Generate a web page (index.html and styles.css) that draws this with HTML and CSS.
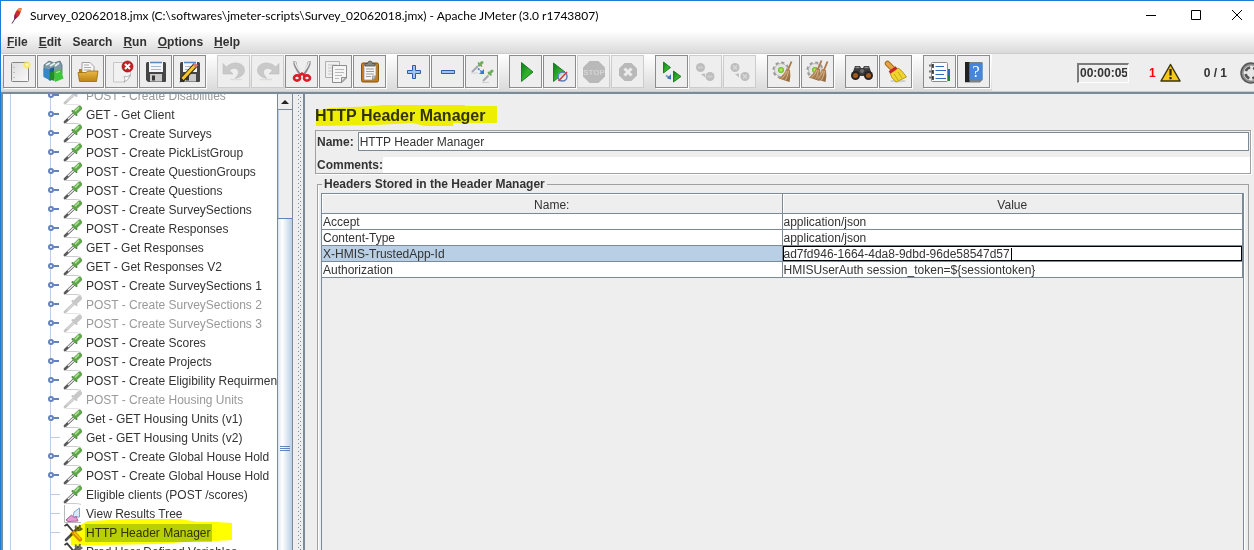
FILE: index.html
```html
<!DOCTYPE html>
<html lang="en">
<head>
<meta charset="utf-8">
<title>Apache JMeter</title>
<link rel="stylesheet" href="styles.css">
</head>
<body>
<svg class="defs" aria-hidden="true">
  <defs>
    <linearGradient id="gPage" x1="0" y1="0" x2="1" y2="1"><stop offset="0" stop-color="#dcdcdc"/><stop offset="1" stop-color="#fafafa"/></linearGradient>
    <linearGradient id="gFolder" x1="0" y1="0" x2="0" y2="1"><stop offset="0" stop-color="#eab84a"/><stop offset="1" stop-color="#bd8410"/></linearGradient>
    <linearGradient id="gPlay" x1="0" y1="0" x2="1" y2="1"><stop offset="0" stop-color="#0a7a1c"/><stop offset=".55" stop-color="#33b52c"/><stop offset="1" stop-color="#0b7d1b"/></linearGradient>
    <linearGradient id="gBroom" x1="0" y1="0" x2="1" y2="1"><stop offset="0" stop-color="#c9a070"/><stop offset="1" stop-color="#8c6238"/></linearGradient>
    <radialGradient id="gBall"><stop offset="0" stop-color="#c9f56a"/><stop offset="1" stop-color="#5fb81a"/></radialGradient>
    <radialGradient id="gGlow"><stop offset="0" stop-color="#fffde0"/><stop offset=".5" stop-color="#f6e85a"/><stop offset="1" stop-color="#f6e85a" stop-opacity="0"/></radialGradient>
    <symbol id="dropper" viewBox="0 0 20 20">
      <path d="M3 18.500h9q4 0 6 1" stroke="#ccc" stroke-width="1" fill="none"/>
      <path d="M2 17L11 8.500" stroke="#5a5a5a" stroke-width="2.800" stroke-linecap="round"/>
      <path d="M5 14L11 8.500" stroke="#f0f0f0" stroke-width="1.400"/>
      <path d="M9.500 6L13.500 10" stroke="#4d8c40" stroke-width="2" stroke-linecap="round"/>
      <path d="M12.500 7L16.500 3.200" stroke="#5da548" stroke-width="5" stroke-linecap="round"/>
      <path d="M12.500 5.800L15.500 2.800" stroke="#a4dc8c" stroke-width="1.800" stroke-linecap="round"/>
    </symbol>
    <symbol id="dropper-off" viewBox="0 0 20 20">
      <path d="M3 18.500h9q4 0 6 1" stroke="#e4e4e4" stroke-width="1" fill="none"/>
      <path d="M2 17L11 8.500" stroke="#c4c4c4" stroke-width="2.800" stroke-linecap="round"/>
      <path d="M4 15L11 8.500" stroke="#d8d8d8" stroke-width="1.200"/>
      <path d="M9.500 6L13.500 10" stroke="#c0c0c0" stroke-width="2" stroke-linecap="round"/>
      <path d="M12.500 7L16.500 3.200" stroke="#c8c8c8" stroke-width="5" stroke-linecap="round"/>
    </symbol>
    <symbol id="tools" viewBox="0 0 20 20">
      <path d="M3 17L15 5" stroke="#4d4d4d" stroke-width="2.600" stroke-linecap="round"/>
      <path d="M13 2.500Q12 6 14 7T18.500 6L16.500 4.500L17 2" fill="none" stroke="#666" stroke-width="2"/>
      <path d="M1.500 3L4 1.500L11 9.500" stroke="#3a3a3a" stroke-width="1.800" fill="none"/>
      <path d="M11 10L17 16.500" stroke="#d88e1d" stroke-width="4.400" stroke-linecap="round"/>
      <path d="M11.500 10L17 15.500" stroke="#f7c85a" stroke-width="1.300" stroke-linecap="round"/>
    </symbol>
    <symbol id="chart" viewBox="0 0 20 20">
      <path d="M1.500 1V18.500H18" stroke="#b8b8b8" fill="none"/>
      <path d="M10 13L11 8L16.500 4V13Z" fill="#dbe9fa" stroke="#7ea6df"/>
      <path d="M3 16L8.500 11L11.500 14L13 12L15 17L5 17.500Z" fill="#e79bd4" stroke="#a8649a"/>
    </symbol>
    <symbol id="floppy" viewBox="0 0 24 24">
      <path d="M2 3.500Q2 2 3.500 2H20.500Q22 2 22 3.500V21Q22 22 21 22H4L2 20Z" fill="#454545"/>
      <rect x="5" y="2" width="14" height="10" fill="#f4f6f9"/>
      <path d="M6 2.500H18" stroke="#5a85c4" stroke-width="1.500"/>
      <path d="M7 6.500H17M7 9.500H17" stroke="#a9b7cb"/>
      <rect x="6" y="14" width="12" height="7.500" fill="#c9c9c9"/><rect x="8" y="15.500" width="3" height="5" fill="#383838"/>
    </symbol>
    <symbol id="undo" viewBox="0 0 24 24">
      <path d="M1 3.500V14H11L7.500 10.500Q12 6.500 15.500 9.500Q18.500 13 13 18.500Q22 16.500 22.500 11Q22.500 4 15 3Q8.500 2.500 4.500 7Z" fill="#c9c9c9" stroke="#bcbcbc" stroke-width=".6"/>
      <path d="M8 19.500H20" stroke="#dcdcdc" stroke-width="1.500"/>
    </symbol>
    <symbol id="gear" viewBox="0 0 24 24">
      <circle cx="9" cy="10" r="7" fill="none" stroke="#9a9a9a" stroke-width="3" stroke-dasharray="3 2.500"/>
      <circle cx="9" cy="10" r="6.500" fill="#e5e5e5" stroke="#b0b0b0" stroke-width=".8"/>
      <circle cx="9" cy="10" r="3" fill="url(#gBall)"/>
    </symbol>
    <symbol id="broom" viewBox="0 0 24 24">
      <path d="M19.500 1.500L16 10" stroke="#a97846" stroke-width="1.800"/>
      <path d="M14.500 8.500L18 10Q19 16 17.500 22L6.500 18.500Q12 15 14.500 8.500Z" fill="url(#gBroom)"/>
      <path d="M15 11Q13 16 10 18.500M16.500 11Q15.500 17 13.500 20" stroke="#e2c39c" stroke-width=".8" fill="none"/>
    </symbol>
  </defs>
</svg>

<div class="window">
  <header class="titlebar">
    <svg class="feather" viewBox="0 0 12 18" aria-hidden="true">
      <path d="M3.500 13Q2.500 7 6 3Q8 .5 10.500 1Q10.500 8 3.500 13Z" fill="#c92a32"/>
      <path d="M6 3Q8 .5 10.500 1Q10.500 3 9.500 5Z" fill="#ee8a3c"/>
      <path d="M3 12Q3 9 4 7L6 10Z" fill="#8b2067"/>
      <path d="M1 16.500L5 10" stroke="#5a2a52" stroke-width="1"/>
    </svg>
    <h1 class="window-title">Survey_02062018.jmx (C:\softwares\jmeter-scripts\Survey_02062018.jmx) - Apache JMeter (3.0 r1743807)</h1>
    <div class="window-controls">
      <button class="wbtn" aria-label="Minimize"><svg viewBox="0 0 12 12"><path d="M1 5.500H11"/></svg></button>
      <button class="wbtn" aria-label="Maximize"><svg viewBox="0 0 12 12"><path d="M.5 .5H9.500V9.500H.5Z"/></svg></button>
      <button class="wbtn" aria-label="Close"><svg viewBox="0 0 12 12"><path d="M1 0L11 10M11 0L1 10"/></svg></button>
    </div>
  </header>

  <nav class="menubar">
    <button class="menu"><u>F</u>ile</button>
    <button class="menu"><u>E</u>dit</button>
    <button class="menu">Search</button>
    <button class="menu"><u>R</u>un</button>
    <button class="menu"><u>O</u>ptions</button>
    <button class="menu"><u>H</u>elp</button>
  </nav>

  <div class="toolrow">
    <div class="toolbar">
      <div class="group">
        <button class="tool" aria-label="New"><svg viewBox="0 0 24 24"><rect x="3.500" y="2.500" width="17" height="19" rx="1" fill="url(#gPage)" stroke="#858585"/><path d="M6 7V8M6 12V13M6 17V18" stroke="#999"/><circle cx="19" cy="5" r="4.500" fill="url(#gGlow)"/></svg></button>
        <button class="tool" aria-label="Templates"><svg viewBox="0 0 24 24"><path d="M2 5L7 1L12 3L18 1L20 5V14L8 20L2 16Z" fill="#7f9aa0" stroke="#557078" stroke-width=".8"/><path d="M4 5L8 3M8 6L13 3M13 6L17 3" stroke="#e7f1f2" stroke-width="1.600"/><path d="M1.500 8L7.500 9.500V20L1.500 17Z" fill="#3488c9"/><path d="M7.500 9L12 7V19L7.500 21Z" fill="#1d5f9c"/><path d="M8 12.500L12.500 11V21L8 19.500Z" fill="#208d27"/><path d="M12 11L19 9.500L21.500 18.500L13 22Z" fill="#3fc73b"/><path d="M14 12.500L18 11.500" stroke="#b5f3a5"/></svg></button>
        <button class="tool" aria-label="Open"><svg viewBox="0 0 24 24"><path d="M3 20V9H9L10 11H20V20Z" fill="#b67e13"/><path d="M6 12V2.500H14L18 6.500V14H6Z" fill="#f7f7f7" stroke="#8c8c8c" stroke-width=".8"/><path d="M8 5H13M8 7.500H15M8 10H15" stroke="#aaa"/><path d="M2 12.500H10L12 11H22L20.500 21.500H3.500Z" fill="url(#gFolder)" stroke="#9c6b0a" stroke-width=".8"/></svg></button>
        <button class="tool" aria-label="Close"><svg viewBox="0 0 24 24"><path d="M3.500 2.500H20.500V16L15 22H3.500Z" fill="#f1f1f1" stroke="#c6c6c6"/><path d="M20.500 15Q17 18 14 16.500Q16 20 14 22Q18 21 20.500 15Z" fill="#fff" stroke="#999" stroke-width=".7"/><circle cx="17.500" cy="6.500" r="5.500" fill="#c81e1e" stroke="#8f1111" stroke-width=".7"/><path d="M15 4L20 9M20 4L15 9" stroke="#fff" stroke-width="2"/></svg></button>
        <button class="tool" aria-label="Save"><svg viewBox="0 0 24 24"><use href="#floppy"/></svg></button>
        <button class="tool" aria-label="Save as"><svg viewBox="0 0 24 24"><use href="#floppy"/><path d="M3.500 20.500L17.500 5" stroke="#3c2a05" stroke-width="5"/><path d="M4.500 19L17 5.500" stroke="#f6c72c" stroke-width="3"/><path d="M16.500 6.500L18.500 4" stroke="#d97979" stroke-width="4"/><path d="M1.500 22.500L3 18L6 21Z" fill="#2a2a2a"/></svg></button>
      </div>
      <div class="group">
        <button class="tool" disabled aria-label="Undo"><svg viewBox="0 0 24 24"><use href="#undo"/></svg></button>
        <button class="tool" disabled aria-label="Redo"><svg viewBox="0 0 24 24"><g transform="matrix(-1 0 0 1 24 0)"><use href="#undo"/></g></svg></button>
        <button class="tool" aria-label="Cut"><svg viewBox="0 0 24 24"><path d="M5 1.500Q4 5 11 15M19 1.500Q20 5 13 15" stroke="#8d8d8d" stroke-width="3.200" fill="none"/><path d="M5 2Q5 5 12 14M19 2Q19 5 12 14" stroke="#ededed" stroke-width="1.400" fill="none"/><ellipse cx="7" cy="18" rx="3" ry="2.600" fill="none" stroke="#d81f26" stroke-width="2.600"/><ellipse cx="17" cy="18" rx="3" ry="2.600" fill="none" stroke="#d81f26" stroke-width="2.600"/><path d="M9 16L12 13.500L15 16" stroke="#d81f26" stroke-width="2.400" fill="none"/></svg></button>
        <button class="tool" aria-label="Copy"><svg viewBox="0 0 24 24"><path d="M1.500 1.500H15.500V17.500H1.500Z" fill="#f0f0f0" stroke="#b0b0b0"/><path d="M4 5H13M4 8H8M4 11H8M4 14H8" stroke="#c5c5c5"/><path d="M8.500 5.500H22.500V18L18 22.500H8.500Z" fill="#f5f5f5" stroke="#8c8c8c"/><path d="M11 9.500H20M11 12.500H20M11 15.500H18M11 18.500H15" stroke="#b9b9b9"/><path d="M22 17.500H17.500V22Z" fill="#ddd" stroke="#777" stroke-width=".8"/></svg></button>
        <button class="tool" aria-label="Paste"><svg viewBox="0 0 24 24"><rect x="3.500" y="3" width="17" height="19" rx="1.500" fill="#c47c1c" stroke="#8a520a"/><path d="M6 5H18V17L15 20H6Z" fill="#f6f6f6" stroke="#8d8d8d" stroke-width=".7"/><path d="M8 9H16M8 11.500H16M8 14H16M8 16.500H13" stroke="#9c9c9c"/><path d="M18 16H14.500V20Z" fill="#c8c8c8" stroke="#777" stroke-width=".6"/><path d="M7 6V3.500H9.500Q10 1 12 1T14.500 3.500H17V6Z" fill="#85887f" stroke="#4b4d48" stroke-width=".8"/></svg></button>
      </div>
      <div class="group">
        <button class="tool" aria-label="Expand all"><svg viewBox="0 0 24 24"><path d="M10.500 5.500H13.500V10.500H18.500V13.500H13.500V18.500H10.500V13.500H5.500V10.500H10.500Z" fill="#9fc3ea" stroke="#2b5cab"/></svg></button>
        <button class="tool" aria-label="Collapse all"><svg viewBox="0 0 24 24"><path d="M5.500 10.500H18.500V13.500H5.500Z" fill="#9fc3ea" stroke="#2b5cab"/></svg></button>
        <button class="tool" aria-label="Toggle"><svg viewBox="0 0 24 24"><path d="M2 12L8 6M13 21L18.500 15.500" stroke="#a9a9a9" stroke-width="2"/><path d="M1 13H8M12 22.500H19" stroke="#d0d0d0"/><path d="M8 2.500L12 6.500M18 12L21.500 15.500" stroke="#6d9e60" stroke-width="1.500"/><path d="M9.500 5L12 2.500M19.500 13.500L22 11" stroke="#6fae5d" stroke-width="3" stroke-linecap="round"/><path d="M8 8.500L12 12" stroke="#2c7be0" stroke-width="1.500" stroke-dasharray="2 1"/><path d="M14 9V14H9Z" fill="#2c7be0"/></svg></button>
      </div>
      <div class="group">
        <button class="tool" aria-label="Start"><svg viewBox="0 0 24 24"><path d="M7.500 2.500L19 12L7.500 21.500Z" fill="url(#gPlay)" stroke="#0a6b16" stroke-width=".8"/></svg></button>
        <button class="tool" aria-label="Start no pauses"><svg viewBox="0 0 24 24"><path d="M5.500 3L17 12L5.500 21.500Z" fill="url(#gPlay)" stroke="#0a6b16" stroke-width=".8"/><circle cx="14.500" cy="16.500" r="4.500" fill="#e6ecf5" fill-opacity=".8" stroke="#5a7fb9" stroke-width="1.500"/><path d="M10.500 21L19 12" stroke="#d93a3a" stroke-width="1.600"/></svg></button>
        <button class="tool" disabled aria-label="Stop"><svg viewBox="0 0 24 24"><path d="M7.500 1H16.500L23 7.500V16.500L16.500 23H7.500L1 16.500V7.500Z" fill="#b9b9b9"/><text x="12" y="15" class="stop-text" text-anchor="middle">STOP</text></svg></button>
        <button class="tool" disabled aria-label="Shutdown"><svg viewBox="0 0 24 24"><path d="M8.500 3H15.500L21 8.500V15.500L15.500 21H8.500L3 15.500V8.500Z" fill="#b9b9b9"/><path d="M8.500 8.500L15.500 15.500M15.500 8.500L8.500 15.500" stroke="#ececec" stroke-width="3"/></svg></button>
      </div>
      <div class="group">
        <button class="tool" aria-label="Remote start all"><svg viewBox="0 0 24 24"><path d="M3.500 2L10.500 7.500L3.500 13Z" fill="url(#gPlay)" stroke="#0a6b16" stroke-width=".8"/><path d="M13.500 11L21 16.500L13.500 22Z" fill="url(#gPlay)" stroke="#0a6b16" stroke-width=".8"/><path d="M6 15.500L9 17.500" stroke="#6c9bd0" stroke-width="2"/><path d="M11 14V19.500L7 18.500Z" fill="#3d74b8"/></svg></button>
        <button class="tool" disabled aria-label="Remote stop all"><svg viewBox="0 0 24 24"><circle cx="6.500" cy="7.500" r="4.500" fill="#bdbdbd"/><circle cx="16" cy="16.500" r="4.500" fill="#bdbdbd"/><path d="M4 7.500H9M13.500 16.500H18.500" stroke="#cfcfcf" stroke-width="2"/><path d="M7 14L11 13.500V17.500Z" fill="#bdbdbd"/></svg></button>
        <button class="tool" disabled aria-label="Remote shutdown all"><svg viewBox="0 0 24 24"><circle cx="7" cy="7.500" r="4.500" fill="#bdbdbd"/><circle cx="17" cy="16.500" r="4.500" fill="#bdbdbd"/><path d="M5 5.500L9 9.500M9 5.500L5 9.500M15 14.500L19 18.500M19 14.500L15 18.500" stroke="#d8d8d8" stroke-width="1.500"/><path d="M7 14L11 13.500V17.500Z" fill="#bdbdbd"/></svg></button>
      </div>
      <div class="group">
        <button class="tool" aria-label="Clear"><svg viewBox="0 0 24 24"><use href="#gear"/><use href="#broom"/></svg></button>
        <button class="tool" aria-label="Clear all"><svg viewBox="0 0 24 24"><use href="#gear"/><g transform="translate(-4 -1)"><use href="#broom"/></g><g transform="translate(2 0)"><use href="#broom"/></g></svg></button>
      </div>
      <div class="group">
        <button class="tool" aria-label="Search tree"><svg viewBox="0 0 24 24"><path d="M1.500 16L5 6H10L11 8H13L14 6H19L22.500 16Z" fill="#3a3a3a"/><path d="M5.500 7.500H9.500M14.500 7.500H18.500" stroke="#8f8f8f" stroke-width="1.500"/><circle cx="5.500" cy="15.500" r="4.500" fill="#242424"/><circle cx="18.500" cy="15.500" r="4.500" fill="#242424"/><circle cx="5.500" cy="15.500" r="2.500" fill="#a55a1c"/><circle cx="18.500" cy="15.500" r="2.500" fill="#a55a1c"/><circle cx="12" cy="11" r="2" fill="#707070"/></svg></button>
        <button class="tool" aria-label="Clear search"><svg viewBox="0 0 24 24"><ellipse cx="14" cy="21" rx="8" ry="1.500" fill="#cfcfcf"/><path d="M3.500 3.500L9 9" stroke="#a86f17" stroke-width="5.500" stroke-linecap="round"/><path d="M3.500 3.500L9 9" stroke="#e0a545" stroke-width="3.500" stroke-linecap="round"/><path d="M6 13L14 8Q18 10 22.500 17L12 22Q7 18 6 13Z" fill="#f0d52f" stroke="#a88c0b" stroke-width=".8"/><path d="M10 14L14 20M14 12L18 18" stroke="#c7a815"/><path d="M5.500 12.500L12.500 7.500" stroke="#cf2027" stroke-width="3"/></svg></button>
      </div>
      <div class="group">
        <button class="tool" aria-label="Function helper"><svg viewBox="0 0 24 24"><path d="M20 9V21" stroke="#15892a" stroke-width="4"/><path d="M20 9V15" stroke="#2869c8" stroke-width="4"/><rect x="3.500" y="2.500" width="16" height="19" rx="1" fill="#fbfbfb" stroke="#8c8c8c"/><path d="M7.500 6.500H16M7.500 10.500H18M7.500 14.500H16M7.500 18.500H18" stroke="#2e68c2" stroke-width="1"/><path d="M1 5.500H5M1 11.500H5M1 17.500H5" stroke="#777" stroke-width="2"/><path d="M5 4V8M5 10V14M5 16V20" stroke="#222" stroke-width="1.500"/></svg></button>
        <button class="tool" aria-label="Help"><svg viewBox="0 0 24 24"><path d="M3 2H20.500V20L18 22.500H3Z" fill="#7a8088"/><path d="M3 2H7.500V22H3Z" fill="#222"/><path d="M7.500 3H20.500V20H7.500Z" fill="#4586d8"/><text x="14" y="17" class="help-text" text-anchor="middle">?</text></svg></button>
      </div>
    </div>
    <div class="status">
      <input class="timer" aria-label="Elapsed time" value="00:00:05" readonly>
      <span class="errors">1</span>
      <svg class="warn" viewBox="0 0 21 20" aria-hidden="true"><path d="M10.500 1.500L20 18H1Z" fill="#f5c816" stroke="#3b3410" stroke-width="1.500" stroke-linejoin="round"/><path d="M10.500 6V12.500M10.500 14V16.200" stroke="#2b260c" stroke-width="2.200"/></svg>
      <span class="threads">0 / 1</span>
      <svg class="round" viewBox="0 0 22 22" aria-hidden="true"><circle cx="11" cy="11" r="10" fill="#8c8c8c" stroke="#555" stroke-width="1.500"/><circle cx="11" cy="11" r="7.500" fill="#e6e6e6"/><circle cx="11" cy="11" r="5.500" fill="none" stroke="#555" stroke-width="2.600" stroke-dasharray="5.600 3.040" stroke-dashoffset="-1.500"/></svg>
    </div>
  </div>

  <main class="main">
    <aside class="tree-pane">
      <div class="tree">
        <ul class="nodes">
          <li class="node off has-kids"><svg class="ico"><use href="#dropper-off"/></svg><span class="label">POST - Create Disabilities</span></li>
          <li class="node has-kids"><svg class="ico"><use href="#dropper"/></svg><span class="label">GET - Get Client</span></li>
          <li class="node has-kids"><svg class="ico"><use href="#dropper"/></svg><span class="label">POST - Create Surveys</span></li>
          <li class="node has-kids"><svg class="ico"><use href="#dropper"/></svg><span class="label">POST - Create PickListGroup</span></li>
          <li class="node has-kids"><svg class="ico"><use href="#dropper"/></svg><span class="label">POST - Create QuestionGroups</span></li>
          <li class="node has-kids"><svg class="ico"><use href="#dropper"/></svg><span class="label">POST - Create Questions</span></li>
          <li class="node has-kids"><svg class="ico"><use href="#dropper"/></svg><span class="label">POST - Create SurveySections</span></li>
          <li class="node has-kids"><svg class="ico"><use href="#dropper"/></svg><span class="label">POST - Create Responses</span></li>
          <li class="node has-kids"><svg class="ico"><use href="#dropper"/></svg><span class="label">GET - Get Responses</span></li>
          <li class="node has-kids"><svg class="ico"><use href="#dropper"/></svg><span class="label">GET - Get Responses V2</span></li>
          <li class="node has-kids"><svg class="ico"><use href="#dropper"/></svg><span class="label">POST - Create SurveySections 1</span></li>
          <li class="node off has-kids"><svg class="ico"><use href="#dropper-off"/></svg><span class="label">POST - Create SurveySections 2</span></li>
          <li class="node off has-kids"><svg class="ico"><use href="#dropper-off"/></svg><span class="label">POST - Create SurveySections 3</span></li>
          <li class="node has-kids"><svg class="ico"><use href="#dropper"/></svg><span class="label">POST - Create Scores</span></li>
          <li class="node has-kids"><svg class="ico"><use href="#dropper"/></svg><span class="label">POST - Create Projects</span></li>
          <li class="node has-kids"><svg class="ico"><use href="#dropper"/></svg><span class="label">POST - Create Eligibility Requirments</span></li>
          <li class="node off has-kids"><svg class="ico"><use href="#dropper-off"/></svg><span class="label">POST - Create Housing Units</span></li>
          <li class="node has-kids"><svg class="ico"><use href="#dropper"/></svg><span class="label">Get - GET Housing Units (v1)</span></li>
          <li class="node"><svg class="ico"><use href="#dropper"/></svg><span class="label">Get - GET Housing Units (v2)</span></li>
          <li class="node has-kids"><svg class="ico"><use href="#dropper"/></svg><span class="label">POST - Create Global House Hold</span></li>
          <li class="node has-kids"><svg class="ico"><use href="#dropper"/></svg><span class="label">POST - Create Global House Hold</span></li>
          <li class="node"><svg class="ico"><use href="#dropper"/></svg><span class="label">Eligible clients (POST /scores)</span></li>
          <li class="node"><svg class="ico"><use href="#chart"/></svg><span class="label">View Results Tree</span></li>
          <li class="node"><svg class="ico"><use href="#tools"/></svg><span class="label selected">HTTP Header Manager</span>
            <svg class="marker tree-marker" viewBox="0 0 162 30" aria-hidden="true"><path d="M8 8L18 3L60 1L110 1L128 4H147L162 5V22L146 23L128 23L90 26L30 27H1L0 15Z" fill="#ff0"/></svg></li>
          <li class="node"><svg class="ico"><use href="#tools"/></svg><span class="label">Prod User Defined Variables</span></li>
        </ul>
      </div>
      <div class="scrollbar">
        <button class="scroll-up" aria-label="Scroll up"><svg viewBox="0 0 8 4"><path d="M0 4L4 0L8 4Z" fill="#222"/></svg></button>
        <div class="track"></div>
        <div class="thumb"><svg class="grip" viewBox="0 0 10 6"><path d="M0 .5H10M0 2.500H10M0 4.500H10" stroke="#6382bf"/></svg></div>
      </div>
    </aside>
    <div class="divider"></div>

    <section class="editor">
      <h2 class="heading">HTTP Header Manager
        <svg class="marker head-marker" viewBox="0 0 183 22" aria-hidden="true"><path d="M1 6L15 3L60 1L68 0H150V1H182V18L138 18V21H110L98 18L60 20L1 21Z" fill="#ff0"/></svg>
      </h2>
      <div class="info">
        <div class="field"><label for="name">Name:</label><input id="name" class="name" value="HTTP Header Manager"></div>
        <div class="field"><label for="comments">Comments:</label><input id="comments" class="comments"></div>
      </div>
      <fieldset class="headers">
        <legend>Headers Stored in the Header Manager</legend>
        <div class="table-box">
          <table>
            <thead><tr><th>Name:</th><th>Value</th></tr></thead>
            <tbody>
              <tr><td>Accept</td><td>application/json</td></tr>
              <tr><td>Content-Type</td><td>application/json</td></tr>
              <tr class="active"><td>X-HMIS-TrustedApp-Id</td><td class="editing"><input class="cell-input" aria-label="Value" value="ad7fd946-1664-4da8-9dbd-96de58547d57"><span class="caret"></span></td></tr>
              <tr><td>Authorization</td><td>HMISUserAuth session_token=${sessiontoken}</td></tr>
            </tbody>
          </table>
        </div>
      </fieldset>
    </section>
  </main>
</div>
</body>
</html>
```
FILE: styles.css
```css
*, *::before, *::after { box-sizing: border-box; }

body {
  margin: 0;
  font: 12px/16px "Liberation Sans", Arial, sans-serif;
  color: #333;
  background: #eee;
}

button, input { font: inherit; color: inherit; margin: 0; }
button { padding: 0; border: 0; background: none; }
.defs { position: absolute; width: 0; height: 0; }

.window {
  display: flex;
  flex-direction: column;
  height: 100vh;
  overflow: hidden;
  border-top: 1px solid #1a7fd4;
  border-left: 1px solid #1a7fd4;
}

/* Title bar */
.titlebar {
  display: flex;
  align-items: center;
  flex: 0 0 30px;
  padding-left: 10px;
  background: #fff;
}
.feather { width: 12px; height: 18px; margin-right: 7px; }
.window-title {
  margin: 0;
  font: 12px/16px Lato, "Open Sans", sans-serif;
  color: #000;
  white-space: nowrap;
}
.window-controls { display: flex; margin-left: auto; }
.wbtn { width: 46px; height: 28px; }
.wbtn:last-child { width: 34px; }
.wbtn svg { display: block; width: 12px; height: 12px; margin: 0 auto; fill: none; stroke: #000; overflow: visible; }

/* Menu bar */
.menubar {
  display: flex;
  flex: 0 0 23px;
  gap: 11px;
  padding-left: 6px;
  background: linear-gradient(#fff, #dadada);
  border-bottom: 1px solid #ccc;
}
.menu { font-weight: bold; line-height: 20px; }

/* Toolbar */
.toolrow {
  display: flex;
  flex: 0 0 38px;
  overflow: hidden;
  border-bottom: 1px solid #ccc;
}
.toolbar {
  display: flex;
  gap: 11px;
  padding: 1px 2px;
  background: linear-gradient(#fff, #dadada);
}
.group { display: flex; gap: 1px; }
.tool {
  display: grid;
  place-items: center;
  width: 33px;
  height: 33px;
  background: #eee;
  border: 1px solid #8c8c8c;
  box-shadow: 1px 1px #fff;
}
.tool:disabled { border-color: #ccc; box-shadow: none; }
.tool svg { width: 24px; height: 24px; }
.stop-text { font: bold 8px "Liberation Sans", sans-serif; fill: #d4d4d4; }
.help-text { font: 16px "Liberation Serif", serif; fill: #fff; }
.status {
  display: flex;
  align-items: center;
  flex: none;
  margin-left: auto;
  margin-right: -8px;
  font-weight: bold;
}
.timer {
  width: 52px;
  height: 20px;
  padding: 0 1px;
  font-weight: bold;
  background: #eee;
  border: 1px solid #fff;
  border-top: 2px solid #7c7c7c;
  border-left: 2px solid #7c7c7c;
}
.errors { margin-left: 20px; color: #f00; }
.warn { width: 21px; height: 20px; margin: 0 23px 0 4px; }
.round { width: 22px; height: 22px; margin-left: 13px; }

/* Split panes */
.main {
  display: flex;
  flex: 1;
  min-height: 0;
  border-top: 2px solid #7a8a99;
}
.tree-pane {
  display: flex;
  flex: 0 0 292px;
  min-width: 0;
  border-left: 2px solid #7a8a99;
  border-right: 1px solid #7a8a99;
}
.tree {
  flex: 1;
  min-width: 0;
  overflow: hidden;
  padding-left: 7px;
  background: #fff;
}
.nodes {
  margin: -8px 0 0;
  padding: 0 0 0 39px;
  list-style: none;
  border-left: 1px solid #b8cfe5;
}
.node {
  position: relative;
  display: flex;
  align-items: center;
  height: 19px;
  padding-left: 12px;
  border-left: 1px solid #b8cfe5;
  white-space: nowrap;
}
.node::before {
  content: "";
  position: absolute;
  left: 0;
  top: 9px;
  width: 9px;
  height: 1px;
  background: #b8cfe5;
}
.has-kids::before { top: 8px; left: 3px; width: 5px; height: 2px; background: #6382bf; }
.has-kids::after {
  content: "";
  position: absolute;
  left: -3px;
  top: 6px;
  width: 6px;
  height: 6px;
  background: #fff;
  border: 2px solid #6382bf;
  border-radius: 50%;
}
.ico { flex: none; width: 20px; height: 20px; margin-right: 2px; }
.label { padding: 0 1px; line-height: 18px; }
.off { color: #999; }
.selected { background: #b8cfe5; }
.marker { position: absolute; mix-blend-mode: multiply; }
.tree-marker { left: 19px; top: -5px; width: 162px; height: 30px; }

.scrollbar {
  display: flex;
  flex-direction: column;
  flex: 0 0 15px;
  overflow: hidden;
  border-left: 1px solid #7a8a99;
  background: #eee;
}
.scroll-up {
  display: grid;
  place-items: center;
  flex: 0 0 16px;
  border-bottom: 1px solid #7a8a99;
}
.scroll-up svg { width: 8px; height: 4px; }
.track { flex: 0 0 108px; border-left: 1px solid #b8cfe5; }
.thumb {
  display: grid;
  place-items: center;
  flex: 0 0 462px;
  border: 1px solid #6382bf;
  border-right: 0;
  margin-left: -1px;
  background: linear-gradient(90deg, #dbe7f3, #fff 30%, #b8cfe5);
}
.grip { width: 10px; height: 6px; }

.divider {
  flex: 0 0 10px;
  background:
    repeating-linear-gradient(#7a8a99 0 1px, transparent 1px 4px) 5px 1px / 1px 100% no-repeat,
    repeating-linear-gradient(#7a8a99 0 1px, transparent 1px 4px) 7px 3px / 1px 100% no-repeat,
    #eee;
}

/* Editor */
.editor {
  display: flex;
  flex-direction: column;
  flex: 1;
  min-width: 0;
  padding: 11px 3px 0 10px;
  border-left: 2px solid #7a8a99;
}
.heading {
  position: relative;
  margin: 0 0 3px;
  font-size: 16px;
  line-height: 22px;
}
.head-marker { left: 0; top: 0; width: 183px; height: 22px; }
.info {
  display: grid;
  gap: 6px;
  padding: 1px 0 0 1px;
  border: 1px solid #a0a0a0;
  box-shadow: 1px 1px #fff;
}
.field { display: flex; align-items: center; font-weight: bold; }
.field input { flex: 1; min-width: 0; font-weight: normal; background: #fff; }
.name { height: 19px; margin: 0 1px 0 4px; padding: 0 1px; border: 1px solid #7a8a99; }
.comments { height: 16px; padding: 0; border: 0; }
.headers {
  flex: 1;
  min-width: 0;
  margin: 2px 2px -10px;
  padding: 1px 4px 0 3px;
  border: 1px solid #a0a0a0;
  box-shadow: inset 1px 0 #fff;
}
.headers legend { margin-left: 1px; padding: 0 2px; font-weight: bold; }
.table-box {
  height: 100%;
  border: 1px solid #7a8a99;
  box-shadow: 1px 0 #fff;
}
table {
  width: 100%;
  border-collapse: separate;
  border-spacing: 0;
  table-layout: fixed;
}
th {
  height: 20px;
  padding: 3px 0 0;
  font-weight: normal;
  line-height: 16px;
  border-right: 1px solid #7a8a99;
  border-bottom: 1px solid #7a8a99;
  box-shadow: inset 1px 1px #fff;
}
td {
  height: 16px;
  padding: 1px 1px 0;
  line-height: 14px;
  background: #fff;
  border-right: 1px solid #7a8a99;
  border-bottom: 1px solid #7a8a99;
}
.active td { background: #b8cfe5; }
.active .editing { position: relative; padding: 0; }
.cell-input {
  display: block;
  width: 100%;
  height: 15px;
  padding: 0;
  line-height: 13px;
  background: #fff;
  border: 1px solid #000;
}
.caret { position: absolute; left: 228px; top: 2px; width: 1px; height: 12px; background: #000; }
```
